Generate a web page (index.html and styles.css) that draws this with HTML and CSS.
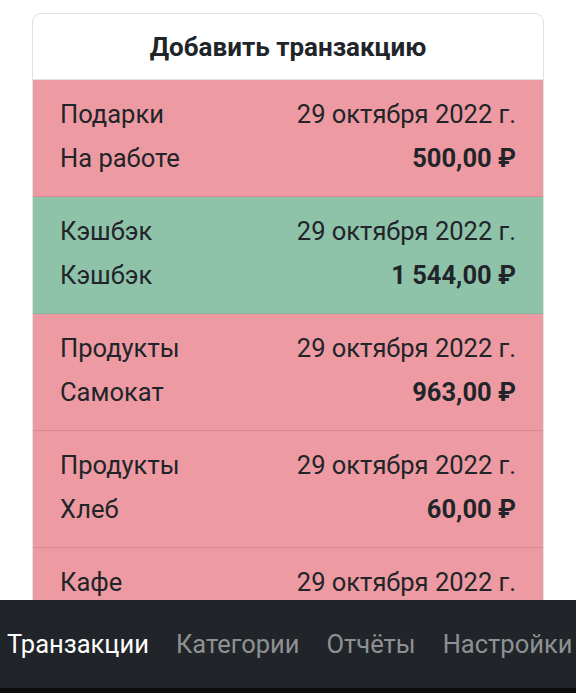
FILE: index.html
```html
<!DOCTYPE html>
<html lang="ru">
<head>
<meta charset="utf-8">
<link rel="stylesheet" href="styles.css">
</head>
<body>
<main class="page">
  <section class="card">
    <div class="card-header">Добавить транзакцию</div>
    <ul class="list">
      <li class="item expense">
        <div class="line"><span>Подарки</span><span>29 октября 2022 г.</span></div>
        <div class="line"><span>На работе</span><span class="amount">500,00 ₽</span></div>
      </li>
      <li class="item income">
        <div class="line"><span>Кэшбэк</span><span>29 октября 2022 г.</span></div>
        <div class="line"><span>Кэшбэк</span><span class="amount">1 544,00 ₽</span></div>
      </li>
      <li class="item expense">
        <div class="line"><span>Продукты</span><span>29 октября 2022 г.</span></div>
        <div class="line"><span>Самокат</span><span class="amount">963,00 ₽</span></div>
      </li>
      <li class="item expense">
        <div class="line"><span>Продукты</span><span>29 октября 2022 г.</span></div>
        <div class="line"><span>Хлеб</span><span class="amount">60,00 ₽</span></div>
      </li>
      <li class="item expense">
        <div class="line"><span>Кафе</span><span>29 октября 2022 г.</span></div>
      </li>
    </ul>
  </section>
</main>
<nav class="tabbar">
  <a class="tab active">Транзакции</a>
  <a class="tab">Категории</a>
  <a class="tab">Отчёты</a>
  <a class="tab">Настройки</a>
</nav>
</body>
</html>
```
FILE: styles.css
```css
* { box-sizing: border-box; }
html, body { margin: 0; padding: 0; background: #fff; }
body {
  font-family: Roboto, "Liberation Sans", sans-serif;
  color: #212529;
  font-size: 25.5px;
}
.page {
  padding: 13px 32px 120px;
}
.card {
  border: 1px solid #dfe2e5;
  border-radius: 9px;
  overflow: hidden;
  background: #fff;
}
.card-header {
  height: 66px;
  display: flex;
  align-items: center;
  justify-content: center;
  font-weight: 700;
  font-size: 26px;
  border-bottom: 1px solid #dfe2e5;
}
.list { list-style: none; margin: 0; padding: 0; }
.item {
  padding: 12px 27px 16px;
  border-bottom: 1px solid #d98c94;
  line-height: 44px;
}
.item.expense { background: #ee9aa2; border-bottom-color: #d88a92; }
.item.income { background: #8ec3aa; border-bottom-color: #7fb59b; }
.line { display: flex; justify-content: space-between; }
.amount { font-weight: 700; }
.tabbar {
  position: fixed;
  left: 0; right: 0; bottom: 0;
  height: 93px;
  background: #212529;
  border-bottom: 5px solid #0b0c0d;
  display: flex;
  align-items: center;
  gap: 27px;
  padding: 0 7px 0;
}
.tab {
  font-size: 25.5px;
  color: #8e9194;
  white-space: nowrap;
}
.tab.active { color: #fff; }
```
